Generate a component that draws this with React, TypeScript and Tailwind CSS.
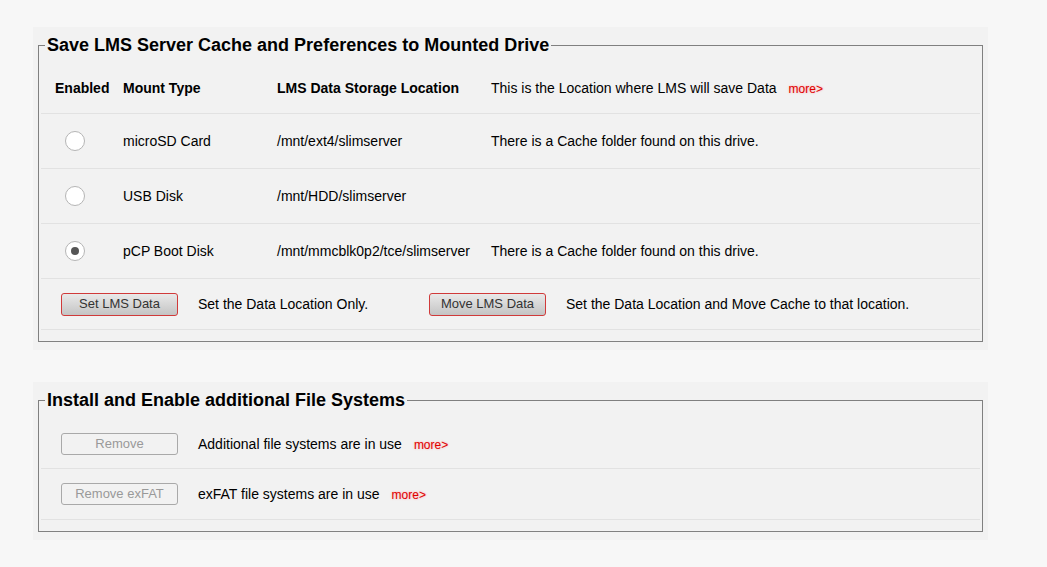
import React from "react";

const font = { fontFamily: '"Liberation Sans", Arial, sans-serif' };

function More() {
  return (
    <span className="ml-[12px] text-[12px] text-[#e00000] [text-shadow:0_0_2px_rgba(255,80,80,0.5)]">
      more&gt;
    </span>
  );
}

function Radio({ checked }: { checked?: boolean }) {
  return (
    <span className="ml-[10px] flex h-[20px] w-[20px] items-center justify-center rounded-full border border-[#b5b5b5] bg-white">
      {checked && <span className="h-[8px] w-[8px] rounded-full bg-[#555]" />}
    </span>
  );
}

function ActionButton({ label }: { label: string }) {
  return (
    <button className="h-[23px] w-[117px] rounded-[3px] border border-[#d03a3a] bg-gradient-to-b from-[#e9e9e9] to-[#c4c4c4] text-[13px] text-[#333]">
      {label}
    </button>
  );
}

function DisabledButton({ label }: { label: string }) {
  return (
    <button
      disabled
      className="h-[22px] w-[117px] rounded-[3px] border border-[#a9a9a9] bg-[#f2f2f2] text-[13px] text-[#999]"
    >
      {label}
    </button>
  );
}

const drives = [
  { type: "microSD Card", path: "/mnt/ext4/slimserver", note: "There is a Cache folder found on this drive.", on: false },
  { type: "USB Disk", path: "/mnt/HDD/slimserver", note: "", on: false },
  { type: "pCP Boot Disk", path: "/mnt/mmcblk0p2/tce/slimserver", note: "There is a Cache folder found on this drive.", on: true },
];

const cols = "grid grid-cols-[68px_154px_214px_1fr] pl-[14px]";

export default function App() {
  return (
    <div style={font} className="min-h-[567px] bg-[#f7f7f7] pl-[33px] pt-[27px] text-[14px] text-black">
      {/* Mounted drive section */}
      <div className="w-[955px] bg-[#f2f2f2] px-[5px] pb-[8px] pt-[8px]">
        <fieldset className="border border-[#808080] px-[2px] pb-[11px]">
          <legend className="ml-[4px] px-[2px] text-[18px] font-bold leading-[20px]">
            Save LMS Server Cache and Preferences to Mounted Drive
          </legend>
          <div className={`${cols} border-b border-[#e2e2e2] pb-[16px] pt-[25px] font-bold leading-[16px]`}>
            <span>Enabled</span>
            <span>Mount Type</span>
            <span>LMS Data Storage Location</span>
            <span className="font-normal">
              This is the Location where LMS will save Data
              <More />
            </span>
          </div>
          {drives.map((d) => (
            <div key={d.type} className={`${cols} h-[55px] items-center border-b border-[#e2e2e2]`}>
              <Radio checked={d.on} />
              <span>{d.type}</span>
              <span>{d.path}</span>
              <span>{d.note}</span>
            </div>
          ))}
          <div className="flex h-[51px] items-center border-b border-[#e2e2e2] pl-[20px]">
            <ActionButton label="Set LMS Data" />
            <span className="ml-[20px] w-[211px]">Set the Data Location Only.</span>
            <span className="ml-[20px]">
              <ActionButton label="Move LMS Data" />
            </span>
            <span className="ml-[20px]">Set the Data Location and Move Cache to that location.</span>
          </div>
        </fieldset>
      </div>

      {/* Extra file systems section */}
      <div className="mt-[32px] w-[955px] bg-[#f2f2f2] px-[5px] pb-[8px] pt-[8px]">
        <fieldset className="border border-[#808080] px-[2px] pb-[11px]">
          <legend className="ml-[4px] px-[2px] text-[18px] font-bold leading-[20px]">
            Install and Enable additional File Systems
          </legend>
          <div className="mt-[8px] flex h-[51px] items-center border-b border-[#e2e2e2] pl-[20px] pt-[2px]">
            <DisabledButton label="Remove" />
            <span className="ml-[20px]">
              Additional file systems are in use
              <More />
            </span>
          </div>
          <div className="flex h-[51px] items-center border-b border-[#e2e2e2] pl-[20px]">
            <DisabledButton label="Remove exFAT" />
            <span className="ml-[20px]">
              exFAT file systems are in use
              <More />
            </span>
          </div>
        </fieldset>
      </div>
    </div>
  );
}
